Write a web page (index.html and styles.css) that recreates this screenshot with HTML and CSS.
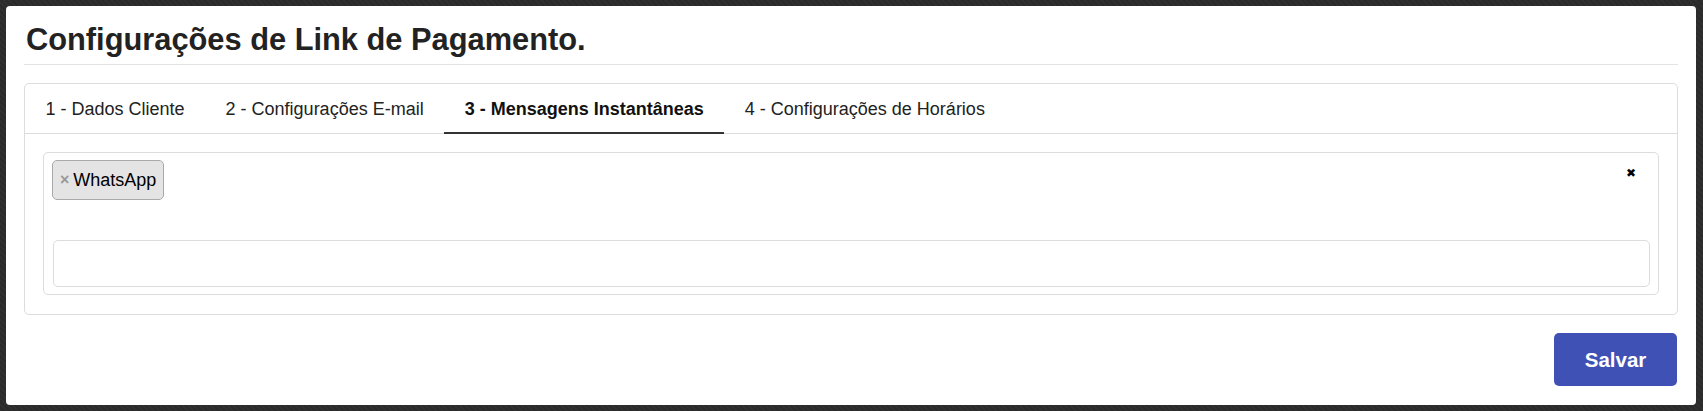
FILE: index.html
```html
<!DOCTYPE html>
<html lang="pt-BR">
<head>
<meta charset="utf-8">
<title>Configurações de Link de Pagamento</title>
<link rel="stylesheet" href="styles.css">
</head>
<body>
<div class="card">
  <h2 class="title">Configurações de Link de Pagamento.</h2>
  <div class="panel">
    <ul class="tabs">
      <li class="tab">1 - Dados Cliente</li>
      <li class="tab">2 - Configurações E-mail</li>
      <li class="tab active">3 - Mensagens Instantâneas</li>
      <li class="tab">4 - Configurações de Horários</li>
    </ul>
    <div class="tab-content">
      <div class="select">
        <div class="chips">
          <span class="chip"><span class="chip-x">×</span>WhatsApp</span>
        </div>
        <span class="clear">✖</span>
        <div class="search"></div>
      </div>
    </div>
  </div>
  <div class="footer">
    <button class="btn">Salvar</button>
  </div>
</div>
</body>
</html>
```

FILE: styles.css
```css
html, body {
  margin: 0;
  padding: 0;
}
body {
  background-color: #2b2b2b;
  background-image: repeating-linear-gradient(45deg, rgba(255,255,255,0.02) 0 2px, rgba(0,0,0,0.03) 2px 4px);
  font-family: "Liberation Sans", Arial, sans-serif;
  color: #222;
  min-height: 411px;
  padding-top: 6px;
  box-sizing: border-box;
}
.card {
  margin-left: 6px;
  width: 1690px;
  box-sizing: border-box;
  background: #fff;
  border-radius: 4px;
  padding: 17px 18px 19px 18px;
}
.title {
  margin: 0;
  font-size: 30.8px;
  font-weight: bold;
  line-height: 33px;
  padding: 0 0 8px 2px;
  border-bottom: 1px solid #e3e3e3;
  color: #222;
}
.panel {
  margin-top: 18px;
  border: 1px solid #dcdcdc;
  border-radius: 5px;
}
.tabs {
  list-style: none;
  margin: 0;
  padding: 0;
  display: flex;
  border-bottom: 1px solid #dcdcdc;
  height: 49px;
}
.tab {
  padding: 0 20.5px;
  font-size: 18px;
  line-height: 50px;
  height: 49px;
  box-sizing: border-box;
  color: #222;
  white-space: nowrap;
}
.tab.active {
  font-weight: bold;
  color: #111;
  border-bottom: 2px solid #333;
  height: 50px;
  line-height: 50px;
}
.tab-content {
  padding: 18px 18px 19px 18px;
}
.select {
  position: relative;
  border: 1px solid #dcdcdc;
  border-radius: 5px;
  padding: 7px 8px;
  display: flex;
  flex-direction: column;
  gap: 40px;
}
.chips {
  display: flex;
}
.chip {
  display: inline-flex;
  align-items: center;
  height: 40px;
  box-sizing: border-box;
  padding: 0 7px 0 7px;
  background: #e4e4e4;
  border: 1px solid #aaa;
  border-radius: 5px;
  font-size: 18px;
  color: #000;
}
.chip-x {
  color: #999;
  font-weight: bold;
  font-size: 16px;
  margin-right: 4px;
}
.clear {
  position: absolute;
  right: 22px;
  top: 13px;
  font-size: 12px;
  font-weight: bold;
  color: #000;
  font-family: "DejaVu Sans", sans-serif;
}
.search {
  height: 47px;
  box-sizing: border-box;
  border: 1px solid #dcdcdc;
  border-radius: 5px;
  margin-left: 1px;
}
.footer {
  display: flex;
  justify-content: flex-end;
  margin-top: 18px;
}
.btn {
  width: 123px;
  height: 53px;
  background: #3f51b5;
  color: #fff;
  border: 0;
  border-radius: 5px;
  font-family: "Liberation Sans", Arial, sans-serif;
  font-weight: bold;
  font-size: 20.5px;
  margin-right: 1px;
}
```
